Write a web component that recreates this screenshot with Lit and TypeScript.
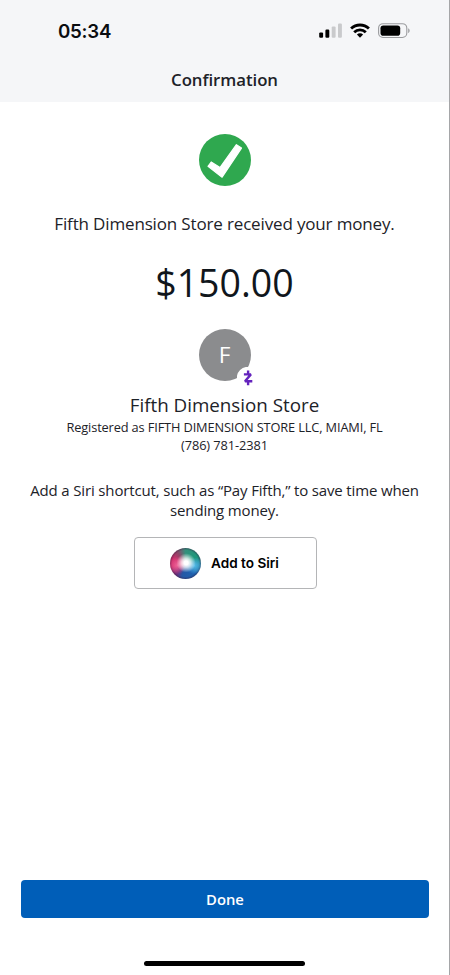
import { LitElement, html, css } from "lit";
import { customElement } from "lit/decorators.js";

@customElement("status-bar")
class StatusBar extends LitElement {
  static styles = css`
    :host {
      display: flex;
      justify-content: space-between;
      align-items: center;
      height: 61px;
      padding: 0 38px 0 58px;
      box-sizing: border-box;
    }
    .time {
      padding-top: 2px;
      font: 600 18.7px/24px Inter, sans-serif;
      letter-spacing: -0.25px;
      color: #0b0d10;
    }
    svg {
      display: block;
    }
  `;
  render() {
    return html`
      <span class="time">05:34</span>
      <svg width="92" height="18" viewBox="0 0 92 18">
        <rect x="0.2" y="10.4" width="3.9" height="5.4" rx="1.1" fill="#000" />
        <rect x="6.4" y="7.6" width="3.9" height="8.2" rx="1.1" fill="#000" />
        <rect x="12.7" y="4.5" width="3.9" height="11.3" rx="1.1" fill="#c9cacc" />
        <rect x="19" y="1.5" width="3.9" height="14.3" rx="1.1" fill="#c9cacc" />
        <g fill="none" stroke="#000" stroke-width="2.8">
          <path d="M32.1 6.6A12.8 12.8 0 0 1 49.9 6.6" />
          <path d="M35.2 10.2A8.2 8.2 0 0 1 46.8 10.2" />
        </g>
        <path d="M41 15.8l-3.1-3.2a4.4 4.4 0 0 1 6.2 0z" fill="#000" />
        <rect x="59.6" y="1.7" width="28.2" height="13.8" rx="4.4" fill="none" stroke="#9a9b9e" stroke-width="1.1" />
        <rect x="61.5" y="3.5" width="19.7" height="10.2" rx="2.8" fill="#000" />
        <path d="M89.2 6.2v4.8c1.9-.7 1.9-4.1 0-4.8z" fill="#9a9b9e" />
      </svg>
    `;
  }
}

@customElement("payee-avatar")
class PayeeAvatar extends LitElement {
  static styles = css`
    :host {
      display: block;
      position: relative;
      width: 52px;
      height: 52px;
    }
    .disc {
      height: 52px;
      border-radius: 50%;
      background: #8b8c8e;
      color: #fff;
      text-align: center;
      font: 400 22.5px/52px "Open Sans", sans-serif;
    }
    .badge {
      position: absolute;
      left: 38px;
      top: 38px;
      display: block;
    }
  `;
  render() {
    return html`
      <div class="disc">F</div>
      <svg class="badge" width="22" height="22" viewBox="0 0 22 22">
        <circle cx="11" cy="11" r="11.2" fill="#fff" />
        <g fill="none" stroke="#6423bd" stroke-width="2.4">
          <path d="M6.9 7.4h7L8 14.2h7.3" stroke-linejoin="bevel" />
          <path d="M11.1 3.5v3.6M11.1 14.4v3.8" />
        </g>
      </svg>
    `;
  }
}

@customElement("siri-button")
class SiriButton extends LitElement {
  static styles = css`
    :host {
      display: block;
    }
    button {
      display: flex;
      align-items: center;
      gap: 10.5px;
      width: 183px;
      height: 52px;
      padding: 0 0 0 35px;
      box-sizing: border-box;
      border: 1px solid #b4b5b7;
      border-radius: 4px;
      background: #fff;
      color: #000;
      font: 600 13.6px/20px Inter, sans-serif;
    }
    .orb {
      flex: none;
      width: 31px;
      height: 31px;
      border-radius: 50%;
      background:
        radial-gradient(circle at 52% 48%, #fff 0 9%, rgba(255, 255, 255, 0.75) 20%, rgba(255, 255, 255, 0) 42%),
        radial-gradient(circle at 24% 56%, rgba(243, 110, 160, 0.85) 0, rgba(225, 60, 130, 0) 30%),
        radial-gradient(circle at 78% 57%, rgba(90, 195, 240, 0.9) 0, rgba(60, 150, 220, 0) 28%),
        radial-gradient(circle, rgba(0, 0, 0, 0) 60%, rgba(50, 25, 60, 0.45) 71%),
        conic-gradient(#35907c, #1c9a7c 60deg, #2787a8 95deg, #1d62b0 135deg, #2558a5 195deg, #6c2f7c 220deg, #d02a6b 255deg, #cf2b69 290deg, #8c4869 325deg, #35907c);
    }
  `;
  render() {
    return html`<button><span class="orb"></span><span>Add to Siri</span></button>`;
  }
}

@customElement("app-root")
class AppRoot extends LitElement {
  static styles = css`
    :host {
      display: flex;
      flex-direction: column;
      width: 450px;
      height: 975px;
      box-sizing: border-box;
      border-right: 1px solid #a5a6a8;
      background: #fff;
      color: #1d2228;
      font-family: "Open Sans", sans-serif;
      overflow: hidden;
    }
    header {
      height: 102px;
      background: #f5f6f8;
    }
    h1 {
      margin: 7px 0 0;
      text-align: center;
      font-size: 16.8px;
      font-weight: 600;
      line-height: 24px;
      letter-spacing: -0.05px;
    }
    main {
      flex: 1;
      display: flex;
      flex-direction: column;
      align-items: center;
      padding-top: 32px;
      text-align: center;
      white-space: nowrap;
    }
    .check {
      display: block;
    }
    p {
      margin: 0;
    }
    .message {
      margin-top: 26px;
      font-size: 17px;
      line-height: 24px;
      letter-spacing: -0.155px;
    }
    .amount {
      margin-top: 22px;
      font-size: 37.5px;
      line-height: 50px;
      color: #10161c;
    }
    payee-avatar {
      margin-top: 20.5px;
    }
    .name {
      margin-top: 11px;
      font-size: 18.8px;
      line-height: 26px;
    }
    .detail {
      font-size: 12.8px;
      line-height: 18.6px;
    }
    .registered {
      letter-spacing: -0.14px;
    }
    .phone {
      letter-spacing: -0.08px;
    }
    .hint {
      margin-top: 25.5px;
      font-size: 15px;
      line-height: 20px;
      letter-spacing: -0.155px;
    }
    siri-button {
      margin-top: 17px;
      padding-left: 1px;
    }
    footer {
      display: flex;
      flex-direction: column;
      align-items: center;
      padding: 0 20px 9px 21px;
    }
    .done {
      align-self: stretch;
      height: 38px;
      border: 0;
      border-radius: 4px;
      background: #005eb8;
      color: #fff;
      font: 600 14.8px/20px "Open Sans", sans-serif;
    }
    .home {
      width: 161px;
      height: 5px;
      margin: 43px 1px 0 0;
      border-radius: 3px;
      background: #000;
    }
  `;
  render() {
    return html`
      <header>
        <status-bar></status-bar>
        <h1>Confirmation</h1>
      </header>
      <main>
        <svg class="check" width="52" height="52" viewBox="0 0 52 52">
          <circle cx="26" cy="26" r="26" fill="#2fa84f" />
          <path
            d="M9 32.3L12.2 28L21 33.6L37.4 10.7L42.5 14.1L23.1 43.2Z"
            fill="#fff" stroke="#fff" stroke-width="1.2" stroke-linejoin="round"
          />
        </svg>
        <p class="message">Fifth Dimension Store received your money.</p>
        <p class="amount">$150.00</p>
        <payee-avatar></payee-avatar>
        <p class="name">Fifth Dimension Store</p>
        <p class="detail registered">Registered as FIFTH DIMENSION STORE LLC, MIAMI, FL</p>
        <p class="detail phone">(786) 781-2381</p>
        <p class="hint">Add a Siri shortcut, such as “Pay Fifth,” to save time when<br />sending money.</p>
        <siri-button></siri-button>
      </main>
      <footer>
        <button class="done">Done</button>
        <div class="home"></div>
      </footer>
    `;
  }
}
